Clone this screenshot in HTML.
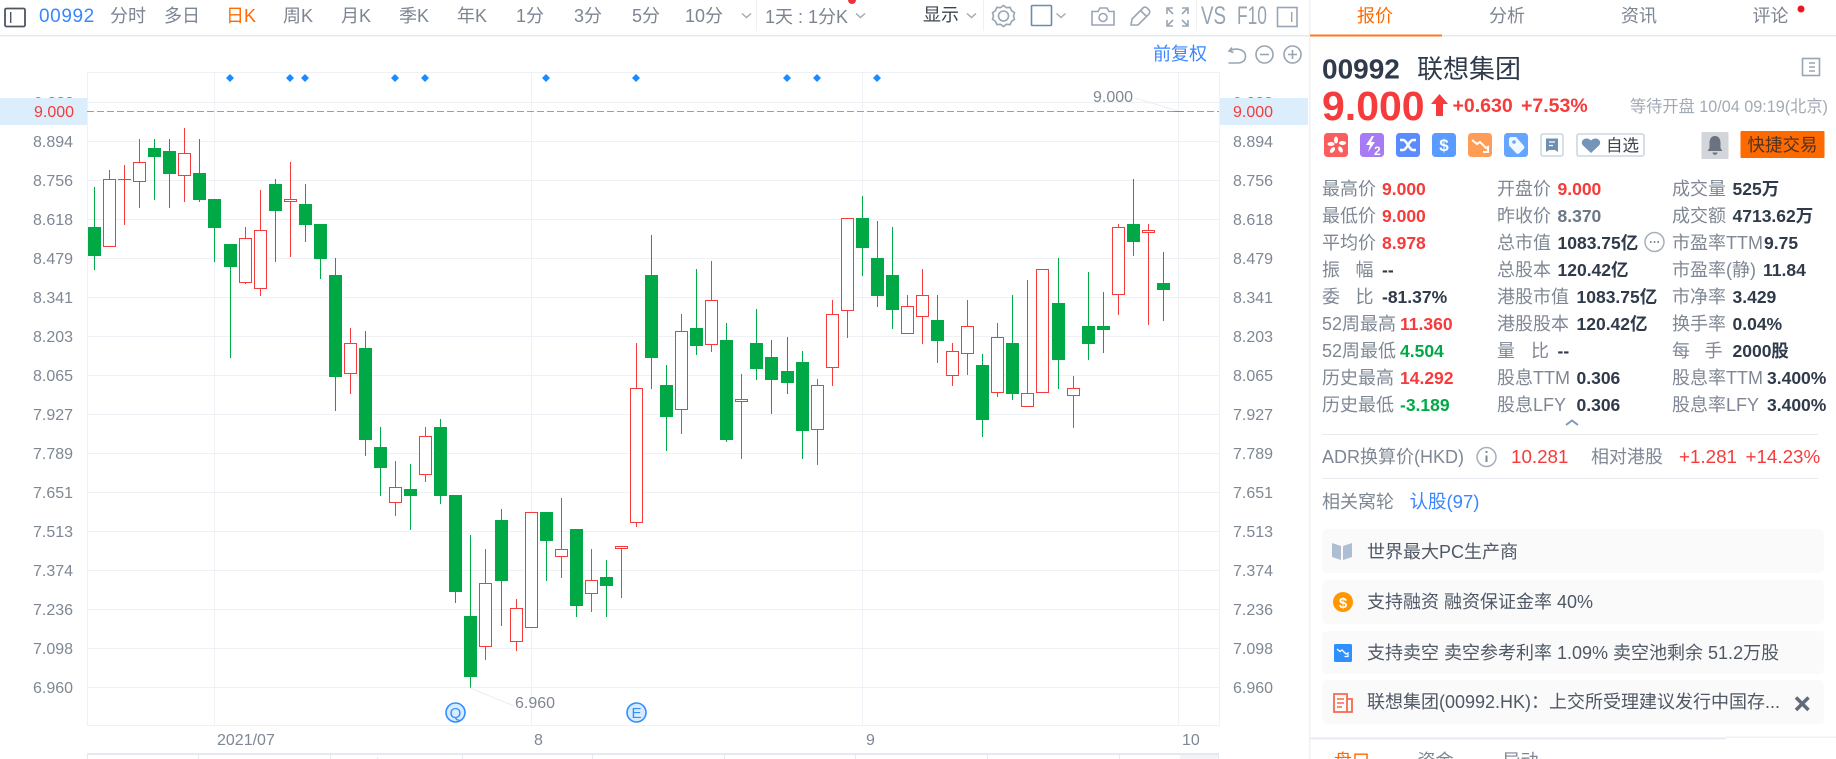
<!DOCTYPE html>
<html lang="zh"><head><meta charset="utf-8"><title>00992</title>
<style>
html,body{margin:0;padding:0;background:#fff;width:1836px;height:759px;overflow:hidden}
svg{display:block;font-family:"Liberation Sans","Noto Sans CJK SC",sans-serif}
.t{font-size:18px;fill:#7d8592}
.a{font-size:16px;fill:#7e8794}
.l{font-size:18px;fill:#7f8794}
.v{font-size:17.5px;font-weight:700;fill:#2f3a4a}
.r{fill:#f53b3b}
.g{fill:#00a846}
.c{font-size:18px;fill:#4f5865}
.ic{fill:none;stroke:#9aa5b3;stroke-width:1.6}
</style></head><body>
<svg width="1836" height="759" viewBox="0 0 1836 759" xmlns="http://www.w3.org/2000/svg">
<!-- chart grid -->
<g fill="#eef2f6" shape-rendering="crispEdges">
<rect x="87" y="72" width="1132" height="1"/><rect x="87" y="102" width="1132" height="1"/>
<rect x="87" y="141" width="1132" height="1"/><rect x="87" y="180" width="1132" height="1"/><rect x="87" y="219" width="1132" height="1"/><rect x="87" y="258" width="1132" height="1"/><rect x="87" y="297" width="1132" height="1"/><rect x="87" y="336" width="1132" height="1"/><rect x="87" y="375" width="1132" height="1"/><rect x="87" y="414" width="1132" height="1"/><rect x="87" y="453" width="1132" height="1"/><rect x="87" y="492" width="1132" height="1"/><rect x="87" y="531" width="1132" height="1"/><rect x="87" y="570" width="1132" height="1"/><rect x="87" y="609" width="1132" height="1"/><rect x="87" y="648" width="1132" height="1"/><rect x="87" y="687" width="1132" height="1"/>
<rect x="87" y="725" width="1132" height="1"/>
<rect x="87" y="72" width="1" height="654"/><rect x="214" y="72" width="1" height="654"/><rect x="531" y="72" width="1" height="654"/><rect x="862" y="72" width="1" height="654"/><rect x="1178" y="72" width="1" height="654"/><rect x="1219" y="72" width="1" height="654"/>
</g>
<!-- price highlight -->
<text class="a" x="34" y="108">9.033</text><text class="a" x="1233" y="108">9.033</text>
<rect x="0" y="98" width="87" height="27" fill="#dcedfc"/><rect x="1220" y="98" width="88" height="27" fill="#dcedfc"/>
<path d="M87 111.5H1219" stroke="#f0883e" stroke-width="1" stroke-dasharray="7 3" fill="none"/>
<text class="a r" x="34" y="117">9.000</text><text class="a r" x="1233" y="117">9.000</text>
<!-- y axis -->
<g class="a">
<text class="a" x="33" y="147">8.894</text><text class="a" x="33" y="186">8.756</text><text class="a" x="33" y="225">8.618</text><text class="a" x="33" y="264">8.479</text><text class="a" x="33" y="303">8.341</text><text class="a" x="33" y="342">8.203</text><text class="a" x="33" y="381">8.065</text><text class="a" x="33" y="420">7.927</text><text class="a" x="33" y="459">7.789</text><text class="a" x="33" y="498">7.651</text><text class="a" x="33" y="537">7.513</text><text class="a" x="33" y="576">7.374</text><text class="a" x="33" y="615">7.236</text><text class="a" x="33" y="654">7.098</text><text class="a" x="33" y="693">6.960</text>
<text class="a" x="1233" y="147">8.894</text><text class="a" x="1233" y="186">8.756</text><text class="a" x="1233" y="225">8.618</text><text class="a" x="1233" y="264">8.479</text><text class="a" x="1233" y="303">8.341</text><text class="a" x="1233" y="342">8.203</text><text class="a" x="1233" y="381">8.065</text><text class="a" x="1233" y="420">7.927</text><text class="a" x="1233" y="459">7.789</text><text class="a" x="1233" y="498">7.651</text><text class="a" x="1233" y="537">7.513</text><text class="a" x="1233" y="576">7.374</text><text class="a" x="1233" y="615">7.236</text><text class="a" x="1233" y="654">7.098</text><text class="a" x="1233" y="693">6.960</text>
</g>
<!-- candles -->
<g shape-rendering="crispEdges">
<path fill="none" stroke="#00a846" stroke-width="1" d="M94.5 187V270M154.5 139V200M169.5 139V208M199.5 139V202M214.5 199V262M230.5 244V358M275.5 179V262M305.5 184V242M320.5 224V279M335.5 258V411M365.5 331V456M380.5 427V496M410.5 464V530M440.5 419V504M455.5 495V603M470.5 535V688M501.5 509V626M546.5 512V581M576.5 529V617M606.5 560V617M651.5 235V389M666.5 365V451M696.5 269V355M726.5 323V442M756.5 309V380M771.5 340V414M787.5 337V394M802.5 351V459M862.5 196V276M877.5 221V307M892.5 227V329M937.5 295V363M982.5 354V437M1012.5 295V400M1058.5 258V389M1088.5 272V360M1103.5 292V353M1133.5 179V256M1163.5 252V321"/>
<path fill="#00a846" d="M88 227h13V256h-13zM148 148h13V157h-13zM163 151h13V174h-13zM193 173h13V200h-13zM208 199h13V228h-13zM224 244h13V267h-13zM269 184h13V211h-13zM299 204h13V225h-13zM314 224h13V259h-13zM329 275h13V377h-13zM359 348h13V440h-13zM374 447h13V468h-13zM404 489h13V496h-13zM434 427h13V496h-13zM449 495h13V592h-13zM464 616h13V677h-13zM495 520h13V581h-13zM540 512h13V541h-13zM570 529h13V606h-13zM600 577h13V586h-13zM645 275h13V358h-13zM660 385h13V417h-13zM690 328h13V346h-13zM720 340h13V440h-13zM750 343h13V369h-13zM765 357h13V380h-13zM781 371h13V383h-13zM796 362h13V431h-13zM856 218h13V248h-13zM871 258h13V296h-13zM886 275h13V310h-13zM931 320h13V341h-13zM976 365h13V420h-13zM1006 343h13V394h-13zM1052 303h13V360h-13zM1082 326h13V344h-13zM1097 326h13V330h-13zM1127 224h13V242h-13zM1157 283h13V290h-13z"/>
<path fill="none" stroke="#f53b3b" stroke-width="1" d="M109.5 170V180M124.5 165V225M139.5 139V208M184.5 128V202M245.5 227V284M260.5 190V296M290.5 162V257M350.5 328V394M395.5 461V516M425.5 427V482M485.5 549V660M516.5 599V651M561.5 498V578M591.5 549V612M621.5 546V598M636.5 343V527M681.5 314V434M711.5 261V352M741.5 374V459M817.5 379V465M832.5 300V386M847.5 218V338M907.5 295V334M922.5 269V344M952.5 343V386M967.5 300V375M997.5 323V397M1027.5 280V407M1073.5 376V428M1118.5 224V315M1148.5 224V325"/>
<path fill="#f53b3b" d="M118 179h13v1h-13z"/>
<path fill="#fff" stroke="#f53b3b" stroke-width="1" d="M103.5 179.5h12V246.5h-12zM133.5 162.5h12V181.5h-12zM178.5 153.5h12V175.5h-12zM239.5 238.5h12V282.5h-12zM254.5 230.5h12V288.5h-12zM284.5 199.5h12V201.5h-12zM344.5 343.5h12V373.5h-12zM389.5 487.5h12V502.5h-12zM419.5 436.5h12V474.5h-12zM479.5 583.5h12V646.5h-12zM510.5 608.5h12V641.5h-12zM525.5 512.5h12V627.5h-12zM555.5 549.5h12V556.5h-12zM585.5 580.5h12V593.5h-12zM615.5 546.5h12V548.5h-12zM630.5 388.5h12V522.5h-12zM675.5 331.5h12V409.5h-12zM705.5 300.5h12V344.5h-12zM735.5 399.5h12V401.5h-12zM811.5 385.5h12V429.5h-12zM826.5 314.5h12V367.5h-12zM841.5 218.5h12V310.5h-12zM901.5 306.5h12V333.5h-12zM916.5 295.5h12V316.5h-12zM946.5 351.5h12V375.5h-12zM961.5 326.5h12V353.5h-12zM991.5 337.5h12V392.5h-12zM1021.5 393.5h12V406.5h-12zM1036.5 269.5h12V392.5h-12zM1067.5 388.5h12V395.5h-12zM1112.5 227.5h12V294.5h-12zM1142.5 230.5h12V232.5h-12z"/>
</g>
<!-- annotations -->
<path d="M1135 98L1178 111M470 688L514 706" stroke="#eceef2" stroke-width="1" fill="none"/>
<path d="M1174 111.5h10" stroke="#c77a45" stroke-width="1"/>
<text class="a" x="1093" y="102" fill="#7e8794">9.000</text>
<text class="a" x="515" y="708">6.960</text>
<g fill="#1a8cff">
<path d="M230 74l4 4-4 4-4-4zM290 74l4 4-4 4-4-4zM305 74l4 4-4 4-4-4zM395 74l4 4-4 4-4-4zM425 74l4 4-4 4-4-4zM546 74l4 4-4 4-4-4zM636 74l4 4-4 4-4-4zM787 74l4 4-4 4-4-4zM817 74l4 4-4 4-4-4zM877 74l4 4-4 4-4-4z"/>
</g>
<circle cx="455.5" cy="712.5" r="9.5" fill="#d8ebff" stroke="#2e8fff" stroke-width="1.6"/><text x="455.5" y="718" text-anchor="middle" font-size="15" fill="#2e8fff">Q</text>
<circle cx="636.5" cy="712.5" r="9.5" fill="#d8ebff" stroke="#2e8fff" stroke-width="1.6"/><text x="636.5" y="718" text-anchor="middle" font-size="15" fill="#2e8fff">E</text>
<!-- x axis -->
<text class="a" x="217" y="745">2021/07</text><text class="a" x="534" y="745">8</text><text class="a" x="866" y="745">9</text><text class="a" x="1182" y="745">10</text>
<g fill="#e4e8ef" shape-rendering="crispEdges">
<rect x="87" y="753" width="1132" height="2"/><rect x="87" y="753" width="1" height="6"/><rect x="1218" y="753" width="1" height="6"/>
<rect x="198" y="754" width="1" height="5"/><rect x="330" y="754" width="1" height="5"/><rect x="462" y="754" width="1" height="5"/><rect x="377" y="757" width="1" height="2"/><rect x="592" y="754" width="1" height="5"/><rect x="724" y="754" width="1" height="5"/><rect x="855" y="754" width="1" height="5"/><rect x="987" y="754" width="1" height="5"/><rect x="1119" y="754" width="1" height="5"/>
<rect x="1180" y="755" width="38" height="4" fill="#f2f3f6"/>
</g>
<!-- top bar -->
<rect x="0" y="35" width="1836" height="1.5" fill="#e6e8ee"/>
<rect x="1309" y="0" width="1.5" height="759" fill="#eef0f4"/>
<rect x="5" y="8.5" width="20" height="18" rx="1.5" fill="none" stroke="#4d5662" stroke-width="1.8"/><rect x="10" y="12" width="1.4" height="11" fill="#4d5662"/>
<text x="39" y="22" font-size="19" letter-spacing=".6" fill="#3a86ff">00992</text>
<text class="t" x="110" y="22">分时</text><text class="t" x="164" y="22">多日</text>
<text class="t" x="226" y="22" style="fill:#ff6a00">日K</text>
<text class="t" x="283" y="22">周K</text><text class="t" x="341" y="22">月K</text><text class="t" x="399" y="22">季K</text><text class="t" x="457" y="22">年K</text>
<text class="t" x="516" y="22">1分</text><text class="t" x="574" y="22">3分</text><text class="t" x="632" y="22">5分</text><text class="t" x="685" y="22">10分</text>
<path d="M742 13.5l4.5 4 4.5-4M856 13.5l4.5 4 4.5-4M967 13.5l4.5 4 4.5-4M1056.5 13.5l4.5 4 4.5-4" fill="none" stroke="#a3abb7" stroke-width="1.5"/>
<rect x="756" y="0" width="1" height="31" fill="#eef0f4"/><rect x="983" y="0" width="1" height="31" fill="#eef0f4"/><rect x="1196" y="0" width="1" height="31" fill="#eef0f4"/>
<text class="t" x="765" y="23">1天 : 1分K</text>
<circle cx="852" cy="0" r="4" fill="#f0303a"/>
<text x="923" y="21" font-size="18" fill="#3b4350">显示</text>
<path class="ic" d="M1003.5 5.5l3 2.2 3.6-.3 1.4 3.3 3 2-1 3.3 1 3.3-3 2-1.4 3.3-3.6-.3-3 2.2-3-2.2-3.6.3-1.4-3.3-3-2 1-3.3-1-3.3 3-2 1.4-3.3 3.6.3z"/><circle class="ic" cx="1003.5" cy="16" r="5"/>
<rect x="1031.5" y="5.5" width="20" height="20" rx="1" fill="none" stroke="#6d8bac" stroke-width="1.6"/>
<path class="ic" d="M1092 11.5h6l2-3.5h7l2 3.5h5v13.5h-22z"/><circle class="ic" cx="1103" cy="17.5" r="4"/>
<path class="ic" d="M1131 25l1-6 11-11c1.300-1.300 3-1.300 4 0l2 2c1 1 1 2.700 0 4l-11 11zM1140.500 10.500l6.500 6.500"/>
<path class="ic" d="M1167 14V8h6M1182 8h6v6M1167 20v6h6M1182 26h6v-6M1168 9l5 5M1187 9l-5 5M1168 25l5-5M1187 25l-5-5"/>
<text x="1201" y="24" font-size="25" textLength="25" lengthAdjust="spacingAndGlyphs" fill="#98a3b1">VS</text>
<text x="1237" y="24" font-size="25" textLength="30" lengthAdjust="spacingAndGlyphs" fill="#98a3b1">F10</text>
<rect class="ic" x="1277.500" y="7.500" width="19.500" height="19"/><rect x="1291" y="12" width="1.400" height="10" fill="#9aa5b3"/>
<text x="1153" y="60" font-size="18" fill="#3a86ff">前复权</text>
<path class="ic" d="M1232 47.500l-3 3.500 4.500 1.500M1230 50.500c5-2.500 15-2 15.500 5.500.300 5-4 7-8 7h-9"/>
<circle class="ic" cx="1264.500" cy="54.500" r="8.500"/><path class="ic" d="M1260 54.500h9"/>
<circle class="ic" cx="1292.500" cy="54.500" r="8.500"/><path class="ic" d="M1288 54.500h9M1292.500 50v9"/>
<!-- right tabs -->
<text x="1357" y="22" font-size="18" fill="#ff6a00">报价</text>
<text class="t" x="1489" y="22">分析</text><text class="t" x="1621" y="22">资讯</text><text class="t" x="1752.500" y="22">评论</text>
<circle cx="1801" cy="9" r="3.500" fill="#f0141e"/>
<rect x="1310" y="34.500" width="132" height="2" fill="#ff7a1f"/>
<!-- title -->
<text x="1322" y="78.500" font-size="28" font-weight="700" fill="#2f3a4a">00992</text>
<text x="1417" y="78" font-size="26" fill="#2f3a4a">联想集团</text>
<rect class="ic" x="1802.500" y="58.500" width="17" height="17"/><path class="ic" d="M1809 63h6M1809 67h6M1809 71h6" stroke-width="1.200"/>
<text x="1322" y="120" font-size="41" font-weight="700" fill="#f53b3b">9.000</text>
<path d="M1439.500 94l8.500 10h-5v12h-7V104h-5z" fill="#f53b3b"/>
<text x="1452.500" y="112" font-size="19.500" font-weight="700" fill="#f53b3b">+0.630</text>
<text x="1521" y="112" font-size="19.500" font-weight="700" fill="#f53b3b">+7.53%</text>
<text x="1630" y="112" font-size="16.200" fill="#a2aab5">等待开盘 10/04 09:19(北京)</text>
<!-- icon row -->
<rect x="1324" y="133" width="24" height="24" rx="3.500" fill="#fb5c5c"/>
<g fill="#fff"><ellipse cx="1336" cy="140" rx="2" ry="3.500"/><ellipse cx="1342.500" cy="143" rx="3.500" ry="2"/><ellipse cx="1331" cy="144" rx="3.500" ry="2"/><ellipse cx="1332.500" cy="150" rx="2" ry="3.300" transform="rotate(40 1332.500 150)"/><ellipse cx="1340.500" cy="149.500" rx="2" ry="3.300" transform="rotate(-30 1340.500 149.500)"/></g>
<rect x="1360" y="133" width="24" height="24" rx="3.500" fill="#a77bf3"/>
<path d="M1372 136l-6 9h4l-2 7 7-10h-4l3-6z" fill="#fff"/><text x="1374" y="155" font-size="12" font-weight="700" fill="#fff">2</text>
<rect x="1396" y="133" width="24" height="24" rx="3.500" fill="#5b8cff"/>
<path d="M1400 140h3c4 0 6 10 10 10h3M1400 150h3c4 0 6-10 10-10h3" fill="none" stroke="#fff" stroke-width="2.400"/>
<rect x="1432" y="133" width="24" height="24" rx="3.500" fill="#5a9bff"/>
<text x="1444" y="151" text-anchor="middle" font-size="17" font-weight="700" fill="#fff">$</text>
<rect x="1468" y="133" width="24" height="24" rx="3.500" fill="#ff9d57"/>
<path d="M1472 140l5 4 3-2 6 6 2-1v5h-5" fill="none" stroke="#fff" stroke-width="2"/>
<rect x="1504" y="133" width="24" height="24" rx="3.500" fill="#64a6ff"/>
<path d="M1509 139c0-1 1-2 2-2h5l8 9c.500 1 .500 2 0 2.500l-5 5c-1 .500-2 .500-2.500 0l-7.500-8z" fill="#eefaff"/><circle cx="1514" cy="142" r="1.800" fill="#64a6ff"/>
<rect x="1541" y="134" width="22" height="22" rx="2" fill="#fff" stroke="#cbd5e1" stroke-width="1.500"/>
<path d="M1546 138.500h12v13.500l-3-2h-6l-3 2z" fill="#6f8fb0"/><path d="M1549 142h6M1549 145.500h4" stroke="#fff" stroke-width="1.200"/>
<rect x="1577" y="134" width="67" height="22" rx="2" fill="#fff" stroke="#cdd6e2" stroke-width="1.600"/>
<path d="M1591 153l-8-7.500c-4-4.500 3-10 8-5 5-5 12 .500 8 5z" fill="#7595b8"/>
<text x="1606" y="151" font-size="16.500" fill="#3b4350">自选</text>
<rect x="1701.500" y="132" width="27" height="27" rx="1" fill="#d2d5da"/>
<path d="M1715 136c4 0 5.500 3.500 5.500 7v5l2 3h-15l2-3v-5c0-3.500 1.500-7 5.500-7zM1712.500 152.500h5c0 3-5 3-5 0z" fill="#6b7280"/>
<rect x="1740.500" y="131" width="84" height="27" rx="1" fill="#ff6a00"/>
<text x="1747.500" y="151" font-size="17.500" fill="#4c3324">快捷交易</text>
<!-- stats -->
<g class="l">
<text class="l" x="1322" y="195">最高价</text><text class="v r" x="1382" y="195">9.000</text>
<text class="l" x="1322" y="222">最低价</text><text class="v r" x="1382" y="222">9.000</text>
<text class="l" x="1322" y="249">平均价</text><text class="v r" x="1382" y="249">8.978</text>
<text class="l" x="1322" y="276">振</text><text class="l" x="1355.500" y="276">幅</text><text class="v" x="1382" y="276">--</text>
<text class="l" x="1322" y="303">委</text><text class="l" x="1355.500" y="303">比</text><text class="v" x="1382" y="303">-81.37%</text>
<text class="l" x="1322" y="330">52周最高</text><text class="v r" x="1400" y="330">11.360</text>
<text class="l" x="1322" y="357">52周最低</text><text class="v g" x="1400" y="357">4.504</text>
<text class="l" x="1322" y="384">历史最高</text><text class="v r" x="1400" y="384">14.292</text>
<text class="l" x="1322" y="411">历史最低</text><text class="v g" x="1400" y="411">-3.189</text>

<text class="l" x="1497" y="195">开盘价</text><text class="v r" x="1557.500" y="195">9.000</text>
<text class="l" x="1497" y="222">昨收价</text><text class="v" x="1557.500" y="222" style="fill:#6c7684">8.370</text>
<text class="l" x="1497" y="249">总市值</text><text class="v" x="1557.500" y="249">1083.75亿</text>
<text class="l" x="1497" y="276">总股本</text><text class="v" x="1557.500" y="276">120.42亿</text>
<text class="l" x="1497" y="303">港股市值</text><text class="v" x="1576.500" y="303">1083.75亿</text>
<text class="l" x="1497" y="330">港股股本</text><text class="v" x="1576.500" y="330">120.42亿</text>
<text class="l" x="1497" y="357">量</text><text class="l" x="1531" y="357">比</text><text class="v" x="1557.500" y="357">--</text>
<text class="l" x="1497" y="384">股息TTM</text><text class="v" x="1576.500" y="384">0.306</text>
<text class="l" x="1497" y="411">股息LFY</text><text class="v" x="1576.500" y="411">0.306</text>

<text class="l" x="1672" y="195">成交量</text><text class="v" x="1732.500" y="195">525万</text>
<text class="l" x="1672" y="222">成交额</text><text class="v" x="1732.500" y="222">4713.62万</text>
<text class="l" x="1672" y="249">市盈率TTM</text><text class="v" x="1764" y="249">9.75</text>
<text class="l" x="1672" y="276">市盈率(静)</text><text class="v" x="1763" y="276">11.84</text>
<text class="l" x="1672" y="303">市净率</text><text class="v" x="1732.500" y="303">3.429</text>
<text class="l" x="1672" y="330">换手率</text><text class="v" x="1732.500" y="330">0.04%</text>
<text class="l" x="1672" y="357">每</text><text class="l" x="1704.500" y="357">手</text><text class="v" x="1732.500" y="357">2000股</text>
<text class="l" x="1672" y="384">股息率TTM</text><text class="v" x="1767" y="384">3.400%</text>
<text class="l" x="1672" y="411">股息率LFY</text><text class="v" x="1767" y="411">3.400%</text>
</g>
<circle cx="1654.500" cy="242" r="9.500" fill="#fff" stroke="#a6afbb" stroke-width="1.500"/><path d="M1650 242h1.600M1653.700 242h1.600M1657.400 242h1.600" stroke="#6f7a88" stroke-width="1.800"/>
<path d="M1566 425l6-4.500 6 4.500" fill="none" stroke="#7f9bbb" stroke-width="2"/>
<!-- ADR -->
<rect x="1322" y="434" width="496" height="1" fill="#e8ebf0"/>
<text class="l" x="1322" y="463">ADR换算价(HKD)</text>
<circle cx="1486.500" cy="457" r="9.500" fill="none" stroke="#a6afbb" stroke-width="1.500"/><path d="M1486.500 455.500v6.500M1486.500 451v2" stroke="#7e8794" stroke-width="2"/>
<text x="1511" y="463" font-size="18.800" fill="#f53b3b">10.281</text>
<text class="l" x="1591" y="463">相对港股</text>
<text x="1679" y="463" font-size="18.800" fill="#f53b3b">+1.281</text>
<text x="1745.500" y="463" font-size="18.800" fill="#f53b3b">+14.23%</text>
<rect x="1322" y="478" width="496" height="1" fill="#e8ebf0"/>
<text class="l" x="1322" y="508">相关窝轮</text>
<text x="1409.500" y="508" font-size="18.500" fill="#3a86ff">认股(97)</text>
<!-- cards -->
<rect x="1322" y="529" width="502" height="44" rx="5" fill="#fafafb"/>
<rect x="1322" y="580" width="502" height="44" rx="5" fill="#fafafb"/>
<rect x="1322" y="631" width="502" height="43" rx="5" fill="#fafafb"/>
<rect x="1322" y="680" width="502" height="44" rx="5" fill="#fafafb"/>
<path d="M1332 543l9 3v14l-9-3zM1352 543l-9 3v14l9-3z" fill="#aebfd4"/>
<text class="c" x="1367" y="558">世界最大PC生产商</text>
<circle cx="1343" cy="602" r="10" fill="#ff9800"/><text x="1343" y="608" text-anchor="middle" font-size="15" font-weight="700" fill="#fff">$</text>
<text class="c" x="1367" y="608">支持融资 融资保证金率 40%</text>
<rect x="1334" y="644" width="18" height="18" rx="1.500" fill="#2e8fff"/><path d="M1337 649l3 2.500 2-1.500 4 4 2-1v3.500h-3.500" fill="none" stroke="#fff" stroke-width="1.300"/>
<text class="c" x="1367" y="659">支持卖空 卖空参考利率 1.09% 卖空池剩余 51.2万股</text>
<path d="M1334 694h13v18h-13zM1347 699h5v13h-5z" fill="none" stroke="#f56a4f" stroke-width="1.800"/><path d="M1337 699h7M1337 703h7M1337 707h5" stroke="#f56a4f" stroke-width="1.500"/>
<text class="c" x="1367" y="708">联想集团(00992.HK)：上交所受理建议发行中国存...</text>
<path d="M1796 697.500l12.500 12.500M1808.500 697.500l-12.500 12.500" stroke="#5f6b7a" stroke-width="3.500" fill="none"/>
<!-- bottom tabs -->
<rect x="1310" y="737.500" width="416" height="1.800" fill="#e6e9ef"/>
<rect x="1726" y="736.500" width="110" height="1.300" fill="#eef0f4"/>
<text x="1334" y="767" font-size="18" fill="#ff6a00">盘口</text>
<text class="t" x="1417.500" y="767">资金</text>
<text class="t" x="1502.500" y="767">异动</text>
</svg>
</body></html>
